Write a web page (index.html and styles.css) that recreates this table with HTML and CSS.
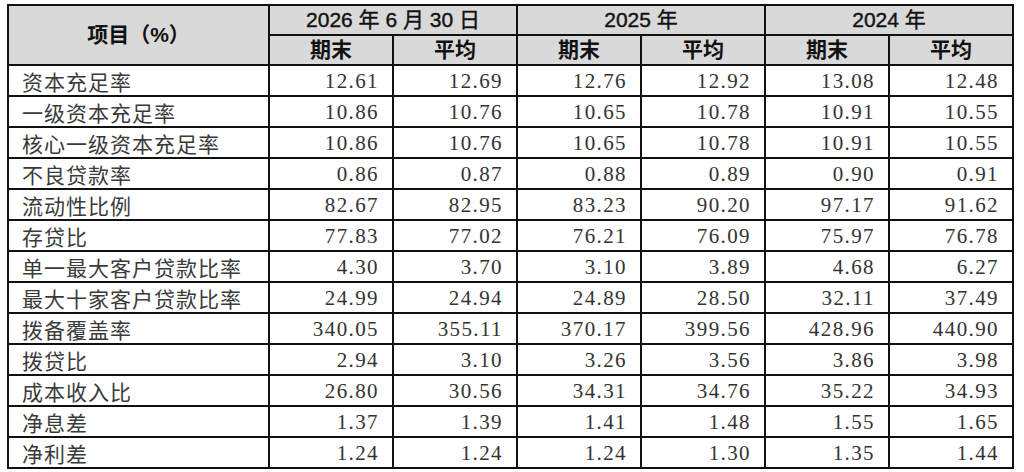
FILE: index.html
```html
<!DOCTYPE html>
<html lang="zh-CN">
<head>
<meta charset="utf-8">
<title>资本指标</title>
<link rel="stylesheet" href="styles.css">
</head>
<body>
<table class="sheet">
  <colgroup>
    <col class="c-label">
    <col class="c-num"><col class="c-num"><col class="c-num">
    <col class="c-num"><col class="c-num"><col class="c-num">
  </colgroup>
  <thead>
    <tr class="h1">
      <th rowspan="2" class="item">项目（%）</th>
      <th colspan="2">2026 年 6 月 30 日</th>
      <th colspan="2">2025 年</th>
      <th colspan="2">2024 年</th>
    </tr>
    <tr class="h2">
      <th>期末</th><th>平均</th>
      <th>期末</th><th>平均</th>
      <th>期末</th><th>平均</th>
    </tr>
  </thead>
  <tbody>
    <tr><td class="lbl">资本充足率</td><td>12.61</td><td>12.69</td><td>12.76</td><td>12.92</td><td>13.08</td><td>12.48</td></tr>
    <tr><td class="lbl">一级资本充足率</td><td>10.86</td><td>10.76</td><td>10.65</td><td>10.78</td><td>10.91</td><td>10.55</td></tr>
    <tr><td class="lbl">核心一级资本充足率</td><td>10.86</td><td>10.76</td><td>10.65</td><td>10.78</td><td>10.91</td><td>10.55</td></tr>
    <tr><td class="lbl">不良贷款率</td><td>0.86</td><td>0.87</td><td>0.88</td><td>0.89</td><td>0.90</td><td>0.91</td></tr>
    <tr><td class="lbl">流动性比例</td><td>82.67</td><td>82.95</td><td>83.23</td><td>90.20</td><td>97.17</td><td>91.62</td></tr>
    <tr><td class="lbl">存贷比</td><td>77.83</td><td>77.02</td><td>76.21</td><td>76.09</td><td>75.97</td><td>76.78</td></tr>
    <tr><td class="lbl">单一最大客户贷款比率</td><td>4.30</td><td>3.70</td><td>3.10</td><td>3.89</td><td>4.68</td><td>6.27</td></tr>
    <tr><td class="lbl">最大十家客户贷款比率</td><td>24.99</td><td>24.94</td><td>24.89</td><td>28.50</td><td>32.11</td><td>37.49</td></tr>
    <tr><td class="lbl">拨备覆盖率</td><td>340.05</td><td>355.11</td><td>370.17</td><td>399.56</td><td>428.96</td><td>440.90</td></tr>
    <tr><td class="lbl">拨贷比</td><td>2.94</td><td>3.10</td><td>3.26</td><td>3.56</td><td>3.86</td><td>3.98</td></tr>
    <tr><td class="lbl">成本收入比</td><td>26.80</td><td>30.56</td><td>34.31</td><td>34.76</td><td>35.22</td><td>34.93</td></tr>
    <tr><td class="lbl">净息差</td><td>1.37</td><td>1.39</td><td>1.41</td><td>1.48</td><td>1.55</td><td>1.65</td></tr>
    <tr><td class="lbl">净利差</td><td>1.24</td><td>1.24</td><td>1.24</td><td>1.30</td><td>1.35</td><td>1.44</td></tr>
  </tbody>
</table>
</body>
</html>
```

FILE: styles.css
```css
html, body {
  margin: 0;
  padding: 0;
  background: #ffffff;
}

body {
  padding: 4px 0 0 7px;
}

.sheet {
  border-collapse: collapse;
  table-layout: fixed;
  width: 1006px;
  border: 2px solid #111;
}

.c-label { width: 261px; }
.c-num { width: 124px; }

.sheet th,
.sheet td {
  border: 2px solid #111;
  padding: 0;
  white-space: nowrap;
  overflow: hidden;
}

.sheet thead th {
  background: #d9d9d9;
  color: #111;
  font-family: "Liberation Sans", "Noto Sans CJK SC", sans-serif;
  font-size: 21px;
  font-weight: 700;
  text-align: center;
  line-height: 26px;
}

.sheet .h1 th {
  height: 28px;
  font-weight: 400;
  -webkit-text-stroke: 0.4px #111;
}

.sheet .h1 th.item {
  font-weight: 700;
  -webkit-text-stroke: 0;
}

.sheet .h2 th {
  height: 28px;
}

.sheet tbody tr {
  height: 31px;
}

.sheet tbody td {
  font-family: "Liberation Serif", serif;
  font-size: 21px;
  color: #333333;
  text-align: right;
  padding-right: 13px;
  letter-spacing: 1.4px;
  line-height: 26px;
}

.sheet tbody td.lbl {
  font-family: "Noto Sans CJK SC", sans-serif;
  font-size: 21px;
  color: #3a3a3a;
  text-align: left;
  padding-left: 13px;
  padding-right: 0;
  letter-spacing: 1px;
}
```
